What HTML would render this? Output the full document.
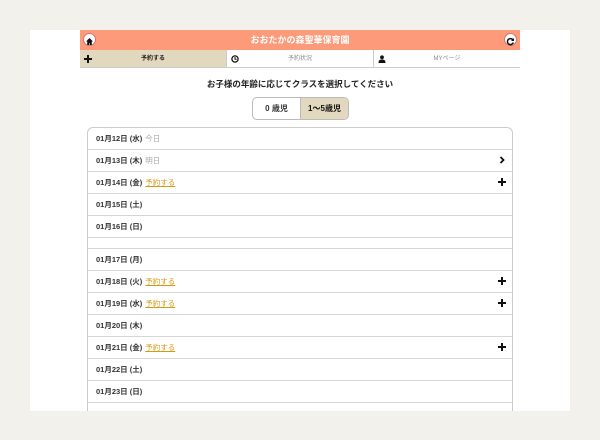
<!DOCTYPE html>
<html><head><meta charset="utf-8"><style>
*{margin:0;padding:0;box-sizing:border-box}
body{width:600px;height:440px;background:#f3f1ec;position:relative;overflow:hidden;font-family:"Liberation Sans","Noto Sans CJK JP",sans-serif}
.panel{position:absolute;left:30px;top:30px;width:540px;height:381px;background:#fff;overflow:hidden}
.hdr{position:absolute;left:50px;top:0;width:440px;height:20px;background:#fd9a7a;color:#fff;font-size:9px;font-weight:bold;text-align:center;line-height:20px}
.circ{position:absolute;top:3px;width:13px;height:13px;border-radius:50%;background:#fff;border:1px solid #c77;}
.tabs{position:absolute;left:50px;top:20px;width:440px;height:18px;border-bottom:1px solid #ccc;display:flex;font-size:6px;line-height:18px}
.tab{flex:1;text-align:center;position:relative;color:#888;border-right:1px solid #ccc}
.tab.on{background:#e1d8bd;color:#222;font-weight:bold}
.ic{position:absolute;left:4px;top:5px}
.ttl{position:absolute;left:0;width:540px;top:48px;text-align:center;font-size:8.5px;font-weight:bold;color:#222}
.seg{position:absolute;left:222px;top:67px;width:97px;height:23px;border:1px solid #bbb;border-radius:5px;overflow:hidden;display:flex;font-size:8px;font-weight:bold;line-height:21px}
.seg div{flex:1;text-align:center;color:#333}
.seg .on{background:#e1d8bd;border-left:1px solid #bbb;color:#111}
.list{position:absolute;left:57px;top:97px;width:426px;border:1px solid #ccc;border-radius:6px 6px 0 0;border-bottom:none}
.row{height:22px;border-bottom:1.5px solid #d6d6d6;font-size:7.5px;font-weight:bold;color:#333;line-height:21px;padding-left:8px;position:relative}
.row.b{height:11px}
.g{color:#aaa;font-weight:normal;margin-left:3px}
.y{color:#d79a14;text-decoration:underline;font-weight:normal;margin-left:3px}
.r{position:absolute;right:6px;top:6px}
</style></head><body>
<svg width="0" height="0" style="position:absolute"><defs>
<symbol id="p" viewBox="0 0 8 8"><path d="M3 0h2v3h3v2H5v3H3V5H0V3h3z" fill="#111"/></symbol>
</defs></svg>
<div class="panel">
<div class="hdr">おおたかの森聖華保育園
<div class="circ" style="left:3px"><svg width="11" height="11" viewBox="0 0 11 11"><path d="M5.5 2L2 5.5h1.2V9h2V7h0.6v2h2V5.5H9z" fill="#111"/></svg></div>
<div class="circ" style="right:3px"><svg width="11" height="11" viewBox="0 0 11 11"><path d="M8 4A3 3 0 1 0 8.3 6.5" stroke="#111" stroke-width="1.5" fill="none"/><path d="M9 2v3H6z" fill="#111"/></svg></div>
</div>
<div class="tabs">
<div class="tab on"><svg class="ic" width="8" height="8"><use href="#p"/></svg>予約する</div>
<div class="tab"><svg class="ic" width="8" height="8" viewBox="0 0 8 8"><circle cx="4" cy="4" r="3.1" stroke="#111" stroke-width="1.3" fill="none"/><path d="M4 2v2.3h1.6" stroke="#111" stroke-width="1" fill="none"/></svg>予約状況</div>
<div class="tab" style="border-right:none"><svg class="ic" width="8" height="8" viewBox="0 0 8 8"><circle cx="4" cy="2.3" r="1.9" fill="#111"/><path d="M0.5 8C0.5 5 2 4.5 4 4.5S7.5 5 7.5 8z" fill="#111"/></svg>MYページ</div>
</div>
<div class="ttl">お子様の年齢に応じてクラスを選択してください</div>
<div class="seg"><div>0 歳児</div><div class="on">1〜5歳児</div></div>
<div class="list">
<div class="row">01月12日 (水)<span class="g">今日</span></div>
<div class="row">01月13日 (木)<span class="g">明日</span><svg class="r" width="8" height="8" viewBox="0 0 8 8"><path d="M2.5 1L5.5 4 2.5 7" stroke="#111" stroke-width="1.8" fill="none"/></svg></div>
<div class="row">01月14日 (金)<span class="y">予約する</span><svg class="r" width="8" height="8"><use href="#p"/></svg></div>
<div class="row">01月15日 (土)</div>
<div class="row">01月16日 (日)</div>
<div class="row b"></div>
<div class="row">01月17日 (月)</div>
<div class="row">01月18日 (火)<span class="y">予約する</span><svg class="r" width="8" height="8"><use href="#p"/></svg></div>
<div class="row">01月19日 (水)<span class="y">予約する</span><svg class="r" width="8" height="8"><use href="#p"/></svg></div>
<div class="row">01月20日 (木)</div>
<div class="row">01月21日 (金)<span class="y">予約する</span><svg class="r" width="8" height="8"><use href="#p"/></svg></div>
<div class="row">01月22日 (土)</div>
<div class="row">01月23日 (日)</div>
<div class="row"></div>
</div>
</div>
</body></html>
